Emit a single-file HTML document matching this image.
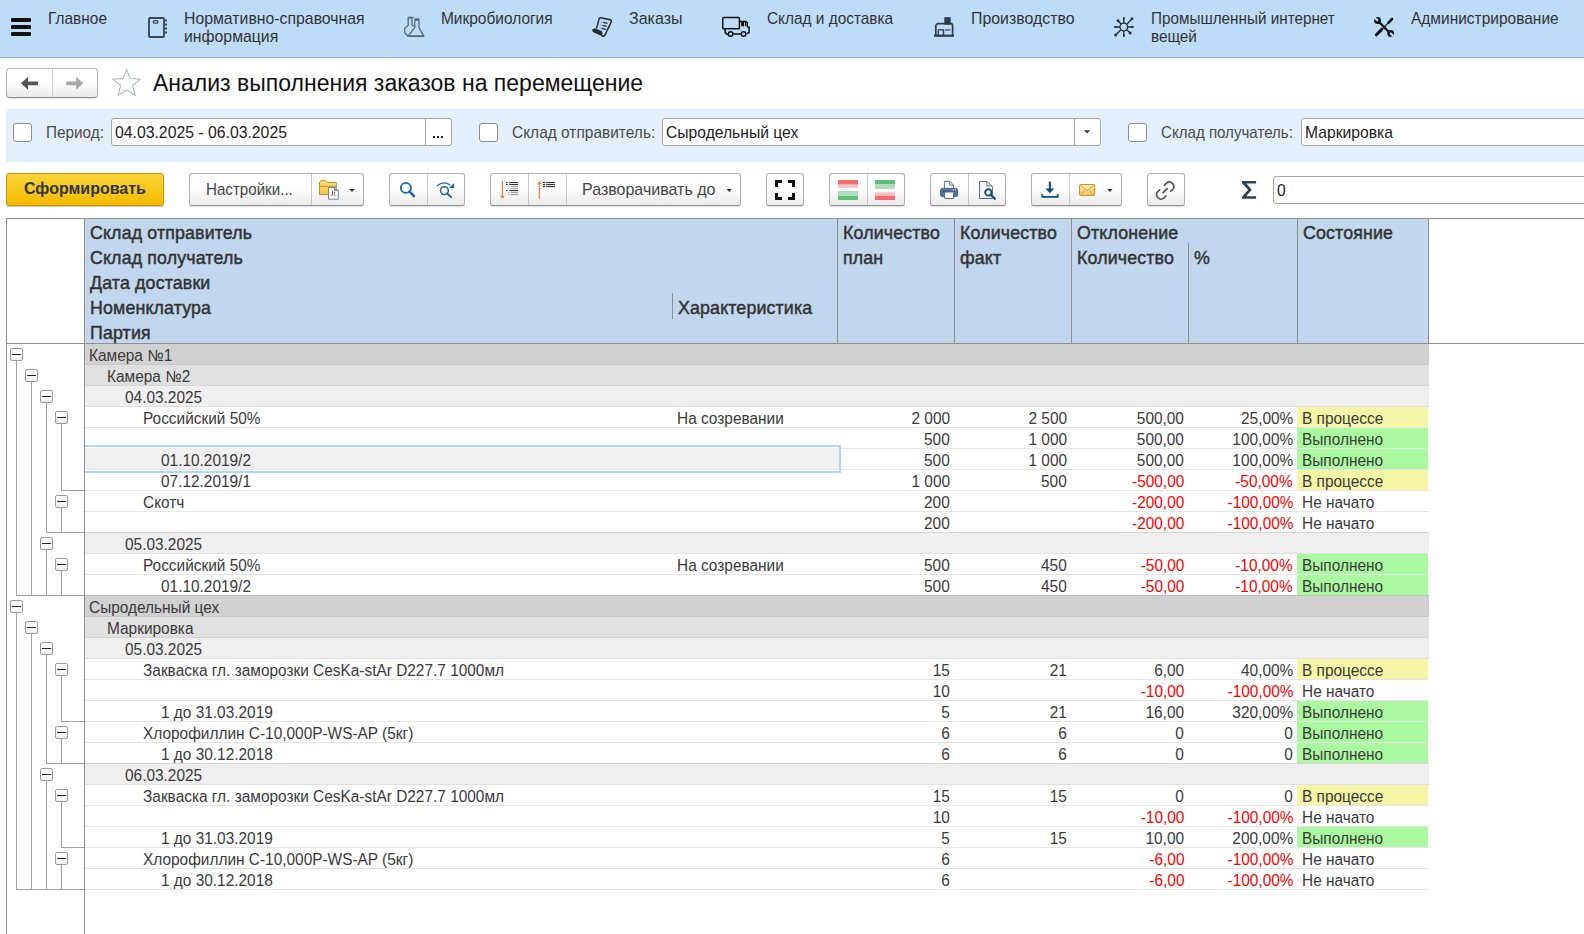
<!DOCTYPE html>
<html><head><meta charset="utf-8"><style>
html,body{margin:0;padding:0;width:1584px;height:934px;overflow:hidden;background:#fff;position:relative;font-family:"Liberation Sans",sans-serif;}
.a{position:absolute;}
.t{position:absolute;white-space:nowrap;}
.btn{box-sizing:border-box;border:1px solid #b0b0b0;border-bottom-color:#939393;border-radius:3px;background:linear-gradient(#fff 45%,#ebebeb);box-shadow:0 1px 0 rgba(0,0,0,.12);}
svg{display:block;}
</style></head><body>
<div class="a" style="left:0px;top:0px;width:1584px;height:57px;background:#bddcf7;"></div>
<div class="a" style="left:0px;top:57px;width:1584px;height:1px;background:#9fb6ca;"></div>
<div class="a" style="left:11px;top:18px;width:20px;height:4px;background:#111;border-radius:1px;"></div>
<div class="a" style="left:11px;top:25px;width:20px;height:4px;background:#111;border-radius:1px;"></div>
<div class="a" style="left:11px;top:32px;width:20px;height:4px;background:#111;border-radius:1px;"></div>
<div class="t" style="left:48px;top:7.61px;font-size:17px;line-height:21px;color:#333;transform:scaleX(0.908);transform-origin:0 0;">Главное</div>
<div class="t" style="left:184px;top:7.61px;font-size:17px;line-height:21px;color:#333;transform:scaleX(0.93);transform-origin:0 0;">Нормативно-справочная</div>
<div class="t" style="left:184px;top:25.61px;font-size:17px;line-height:21px;color:#333;transform:scaleX(0.93);transform-origin:0 0;">информация</div>
<div class="t" style="left:441px;top:7.61px;font-size:17px;line-height:21px;color:#333;transform:scaleX(0.909);transform-origin:0 0;">Микробиология</div>
<div class="t" style="left:629px;top:7.61px;font-size:17px;line-height:21px;color:#333;transform:scaleX(0.942);transform-origin:0 0;">Заказы</div>
<div class="t" style="left:767px;top:7.61px;font-size:17px;line-height:21px;color:#333;transform:scaleX(0.905);transform-origin:0 0;">Склад и доставка</div>
<div class="t" style="left:971px;top:7.61px;font-size:17px;line-height:21px;color:#333;transform:scaleX(0.934);transform-origin:0 0;">Производство</div>
<div class="t" style="left:1151px;top:7.61px;font-size:17px;line-height:21px;color:#333;transform:scaleX(0.898);transform-origin:0 0;">Промышленный интернет</div>
<div class="t" style="left:1151px;top:25.61px;font-size:17px;line-height:21px;color:#333;transform:scaleX(0.898);transform-origin:0 0;">вещей</div>
<div class="t" style="left:1411px;top:7.61px;font-size:17px;line-height:21px;color:#333;transform:scaleX(0.911);transform-origin:0 0;">Администрирование</div>
<div class="a" style="left:146px;top:15px"><svg width="24" height="25" viewBox="146 15 24 25"><rect x="149" y="18" width="15" height="19" rx="1" fill="none" stroke="#3e4a55" stroke-width="1.9"/><path d="M165 20.5h2M165 24.5h2M165 28.5h2M165 32.5h2" stroke="#3e4a55" stroke-width="2"/><rect x="153.3" y="20.6" width="4.6" height="2.6" rx="1.3" fill="none" stroke="#3e4a55" stroke-width="1.3"/></svg></div>
<div class="a" style="left:402px;top:15px"><svg width="26" height="25" viewBox="402 15 26 25"><path d="M407.6 17.6h5.8" stroke="#5b6b79" stroke-width="1.8"/><path d="M408.2 18v7.3l-3.4 3v4.6l3.7 3.6" fill="none" stroke="#5b6b79" stroke-width="1.3"/><path d="M412 18v6.8l2.3 1.5" fill="none" stroke="#5b6b79" stroke-width="1.3"/><rect x="414.2" y="18.3" width="5.6" height="2.6" rx="1.2" fill="#5b6b79"/><path d="M414.8 21v6.5L408.2 36h15.5l-4.7-8.5V21" fill="none" stroke="#5b6b79" stroke-width="1.3"/><path d="M408 36.3h16" stroke="#5b6b79" stroke-width="1.5"/></svg></div>
<div class="a" style="left:589px;top:14px"><svg width="27" height="26" viewBox="589 14 27 26"><path d="M599.5 17.6L610.5 19.8q1.4.6 .9 1.9L604.8 35.3q-1.2 1.7-3.2 .6" fill="none" stroke="#222a30" stroke-width="1.5"/><path d="M599.5 17.6L596.4 28.6" stroke="#222a30" stroke-width="1.5"/><path d="M592.3 29.2q2-1 4.4-.3l5.3 2.4q1.3 2.5-.3 4.6l-7.9-3.3q-2-1.2-1.5-3.4z" fill="#222a30"/><path d="M601.4 22h.6M603.2 22.4l4.3.9M600.6 25h.6M602.4 25.4l4.3.9M599.8 28h.6M601.6 28.4l4.3.9" stroke="#222a30" stroke-width="1.2"/></svg></div>
<div class="a" style="left:720px;top:14px"><svg width="32" height="26" viewBox="720 14 32 26"><rect x="722.8" y="17.5" width="16.6" height="11.2" rx=".8" fill="none" stroke="#111" stroke-width="1.5"/><path d="M739.4 21.6h6.6l1.3 1.2v4.3" fill="none" stroke="#111" stroke-width="1.5"/><rect x="741.2" y="21.5" width="2.8" height="4.8" fill="#111"/><path d="M745.5 22v4" stroke="#111" stroke-width="1.3"/><path d="M747.3 27.3h1.8v5.2l-2 1.2" fill="none" stroke="#111" stroke-width="1.5"/><path d="M725.1 28.8v3.8l2.6 2.3" fill="none" stroke="#111" stroke-width="1.5"/><circle cx="730.6" cy="34" r="2.3" fill="none" stroke="#111" stroke-width="1.5"/><circle cx="743.6" cy="34" r="2.3" fill="none" stroke="#111" stroke-width="1.5"/><path d="M732.9 34h8.4" stroke="#111" stroke-width="1.5"/></svg></div>
<div class="a" style="left:932px;top:15px"><svg width="24" height="24" viewBox="932 15 24 24"><rect x="944.3" y="17.2" width="6.4" height="7.5" fill="#2f3b46"/><path d="M935.8 36V25.5l1.6-1.8h14.4l.8 1.6V36" fill="none" stroke="#2f3b46" stroke-width="1.7"/><path d="M938.3 36.2v-6.3h5.2v6.3" fill="none" stroke="#2f3b46" stroke-width="1.4"/><path d="M945 30h5.5" stroke="#2f3b46" stroke-width="1.1"/><rect x="934" y="34.6" width="20" height="2.2" fill="#2f3b46"/></svg></div>
<div class="a" style="left:1112px;top:15px"><svg width="24" height="24" viewBox="1112 15 24 24"><circle cx="1123.8" cy="27" r="3.8" fill="none" stroke="#26323c" stroke-width="1.3"/><g stroke="#26323c" stroke-width="1.4"><path d="M1123.8 17.8v5.4M1123.8 30.8v5.4M1114.6 27h5.4M1128 27h5.4M1118.4 21.2l3 3M1126.6 29.6l3.3 3.2M1132 18.8l-5.2 5.4M1115.7 35.1l5.2-5.3"/></g><g fill="#26323c"><rect x="1123" y="17.3" width="1.8" height="2.5"/><rect x="1123" y="34.3" width="1.8" height="2.5"/><rect x="1114.2" y="26.1" width="2.5" height="1.8"/><rect x="1131" y="26.1" width="2.5" height="1.8"/><circle cx="1118" cy="20.8" r="1.5"/><circle cx="1130.2" cy="33" r="1.5"/><circle cx="1132" cy="18.8" r="1.5"/><circle cx="1115.7" cy="35.1" r="1.5"/></g></svg></div>
<div class="a" style="left:1372px;top:15px"><svg width="24" height="24" viewBox="1372 15 24 24"><path d="M1378.6 21.6l11 11" stroke="#111" stroke-width="2.2"/><circle cx="1377.5" cy="20.5" r="3.4" fill="#111"/><path d="M1377.3 20.3l-3.2-3.2" stroke="#bddcf7" stroke-width="2.3" stroke-linecap="round"/><circle cx="1390.7" cy="33.4" r="3.4" fill="#111"/><path d="M1390.9 33.6l3.2 3.2" stroke="#bddcf7" stroke-width="2.3" stroke-linecap="round"/><path d="M1376.4 34.8l5.4-5.4" stroke="#111" stroke-width="3" stroke-linecap="round"/><path d="M1381.6 29.6l7-7" stroke="#111" stroke-width="1.1"/><path d="M1388.6 22.6l3.4-3.6" stroke="#111" stroke-width="2.6" stroke-linecap="round"/></svg></div>
<div class="a btn" style="left:6px;top:68px;width:92px;height:30px;border-radius:4px;"></div>
<div class="a" style="left:52px;top:69px;width:1px;height:28px;background:#cfcfcf;"></div>
<div class="a" style="left:18px;top:74px"><svg width="24" height="18" viewBox="18 74 24 18"><path d="M21 83.3l7-6.5v4.6h10v3.8H28v4.6z" fill="#545454"/></svg></div>
<div class="a" style="left:63px;top:74px"><svg width="24" height="18" viewBox="63 74 24 18"><path d="M83.2 83.3l-7-6.5v4.6h-10v3.8h10v4.6z" fill="#a6a6a6"/></svg></div>
<div class="a" style="left:108px;top:66px"><svg width="38" height="34" viewBox="108 66 38 34"><path d="M126.6 69.6l3.7 9 9.9.6-7.6 6.4 2.5 9.8-8.5-5.4-8.5 5.4 2.5-9.8-7.6-6.4 9.9-.6z" fill="none" stroke="#a9b4bd" stroke-width="1.05"/></svg></div>
<div class="t" style="left:153px;top:68.53px;font-size:23px;line-height:29px;color:#111;">Анализ выполнения заказов на перемещение</div>
<div class="a" style="left:6px;top:109px;width:1578px;height:53px;background:#e3effb;"></div>
<div class="a" style="left:13px;top:123px;width:19px;height:19px;background:#fff;border:1px solid #8c8c8c;border-radius:3px;box-sizing:border-box;"></div>
<div class="a" style="left:479px;top:123px;width:19px;height:19px;background:#fff;border:1px solid #8c8c8c;border-radius:3px;box-sizing:border-box;"></div>
<div class="a" style="left:1128px;top:123px;width:19px;height:19px;background:#fff;border:1px solid #8c8c8c;border-radius:3px;box-sizing:border-box;"></div>
<div class="t" style="left:46px;top:121.61px;font-size:17px;line-height:21px;color:#4a4a4a;transform:scaleX(0.901);transform-origin:0 0;">Период:</div>
<div class="t" style="left:512px;top:121.61px;font-size:17px;line-height:21px;color:#4a4a4a;transform:scaleX(0.91);transform-origin:0 0;">Склад отправитель:</div>
<div class="t" style="left:1161px;top:121.61px;font-size:17px;line-height:21px;color:#4a4a4a;transform:scaleX(0.888);transform-origin:0 0;">Склад получатель:</div>
<div class="a" style="left:111px;top:118px;width:341px;height:28px;background:#fff;border:1px solid #a6a6a6;border-radius:3px;box-sizing:border-box;"></div>
<div class="a" style="left:425px;top:119px;width:1px;height:26px;background:#a9a9a9;"></div>
<div class="t" style="left:115px;top:121.61px;font-size:17px;line-height:21px;color:#222;transform:scaleX(0.928);transform-origin:0 0;">04.03.2025 - 06.03.2025</div>
<div class="a" style="left:433px;top:136px;width:2px;height:2px;background:#222;"></div>
<div class="a" style="left:437px;top:136px;width:2px;height:2px;background:#222;"></div>
<div class="a" style="left:441px;top:136px;width:2px;height:2px;background:#222;"></div>
<div class="a" style="left:662px;top:118px;width:439px;height:28px;background:#fff;border:1px solid #a6a6a6;border-radius:3px;box-sizing:border-box;"></div>
<div class="a" style="left:1074px;top:119px;width:1px;height:26px;background:#a9a9a9;"></div>
<div class="t" style="left:666px;top:121.61px;font-size:17px;line-height:21px;color:#222;transform:scaleX(0.921);transform-origin:0 0;">Сыродельный цех</div>
<div class="a" style="left:1082px;top:128px"><svg width="10" height="8" viewBox="1082 128 10 8"><path d="M1084 130.2h6.2l-3.1 3.4z" fill="#333"/></svg></div>
<div class="a" style="left:1301px;top:118px;width:300px;height:28px;background:#fff;border:1px solid #a6a6a6;border-radius:3px;box-sizing:border-box;"></div>
<div class="t" style="left:1305px;top:121.61px;font-size:17px;line-height:21px;color:#222;transform:scaleX(0.922);transform-origin:0 0;">Маркировка</div>
<div class="a" style="left:6px;top:173px;width:158px;height:33px;box-sizing:border-box;border:1px solid #c29a00;border-radius:3px;background:linear-gradient(#fdd53a,#f5bb00);box-shadow:0 1px 1px rgba(0,0,0,.25)"></div>
<div class="t" style="left:24px;top:179.46px;font-size:16px;line-height:20px;color:#2f3542;font-weight:bold;">Сформировать</div>
<div class="a btn" style="left:189px;top:173px;width:175px;height:33px;"></div>
<div class="a" style="left:311px;top:174px;width:1px;height:31px;background:#c9c9c9;"></div>
<div class="t" style="left:206px;top:178.61px;font-size:17px;line-height:21px;color:#444;transform:scaleX(0.89);transform-origin:0 0;">Настройки...</div>
<div class="a" style="left:317px;top:178px"><svg width="24" height="23" viewBox="317 178 24 23"><path d="M319.5 194.6V182.2l2.4-1.9h3.4l2.4 2.2h8.6v12.1z" fill="url(#fold)" stroke="#c98a2a" stroke-width="1"/><path d="M319.6 186.3h16.5" stroke="#c98a2a" stroke-width=".9"/><defs><linearGradient id="fold" x1="0" y1="0" x2="0" y2="1"><stop offset="0" stop-color="#ffe26a"/><stop offset="1" stop-color="#f2c350"/></linearGradient></defs><path d="M328.6 187.6h6.7l3.1 3.1v8.5h-9.8z" fill="#fff" stroke="#718190" stroke-width="1"/><path d="M334.6 187.8v2.8h3.4" fill="#8a9aa8" stroke="#718190" stroke-width=".9"/><path d="M332.5 195.2v-4.3" stroke="#e33" stroke-width="1"/><path d="M334.4 195.2v-3.6" stroke="#4a4" stroke-width="1"/><path d="M330 195.3h7" stroke="#999" stroke-width=".7"/></svg></div>
<div class="a" style="left:348px;top:188px"><svg width="8" height="5" viewBox="348 188 8 5"><path d="M349 189h6l-3 3z" fill="#3a3a3a"/></svg></div>
<div class="a btn" style="left:389px;top:173px;width:76px;height:33px;"></div>
<div class="a" style="left:427px;top:174px;width:1px;height:31px;background:#c9c9c9;"></div>
<div class="a" style="left:396px;top:179px"><svg width="22" height="21" viewBox="396 179 22 21"><circle cx="405.9" cy="187.9" r="5" fill="none" stroke="#1f67a0" stroke-width="1.9"/><path d="M409.6 191.6l4.3 4.4" stroke="#1f67a0" stroke-width="2.6" stroke-linecap="round"/></svg></div>
<div class="a" style="left:434px;top:179px"><svg width="24" height="21" viewBox="434 179 24 21"><circle cx="444.4" cy="190.6" r="3.9" fill="none" stroke="#1f67a0" stroke-width="1.5"/><path d="M447.3 193.5l3.7 3.6" stroke="#1f67a0" stroke-width="2" stroke-linecap="round"/><path d="M437.4 185.6q6.5-5.2 12.6-.6" fill="none" stroke="#1f67a0" stroke-width="1.3" stroke-linecap="round"/><path d="M454.2 183v5h-5.2z" fill="#1f67a0"/></svg></div>
<div class="a btn" style="left:490px;top:173px;width:251px;height:33px;"></div>
<div class="a" style="left:528px;top:174px;width:1px;height:31px;background:#c9c9c9;"></div>
<div class="a" style="left:566px;top:174px;width:1px;height:31px;background:#c9c9c9;"></div>
<div class="a" style="left:498px;top:179px"><svg width="23" height="22" viewBox="498 179 23 22"><path d="M502.4 181v15.5" stroke="#f0813f" stroke-width="1.3"/><path d="M500 195.8h4.9l-2.45 3.3z" fill="#f0813f"/><g stroke="#1a1a1a" stroke-width="1"><path d="M506 182.6h1.6M509.3 182.6h8.7M506 184.6h1.6M509.3 184.6h8.7M506 190.6h1.6M509.3 190.6h8.7"/></g><g stroke="#8a8a8a" stroke-width=".9"><path d="M508 186.6h1.2M511 186.6h7M508 188.6h1.2M511 188.6h7M508 192.6h1.2M511 192.6h7M508 194.6h1.2M511 194.6h7"/></g></svg></div>
<div class="a" style="left:535px;top:179px"><svg width="23" height="22" viewBox="535 179 23 22"><path d="M539.4 183.5V199" stroke="#f0813f" stroke-width="1.3"/><path d="M537 184.2h4.9l-2.45-3.3z" fill="#f0813f"/><g stroke="#1a1a1a" stroke-width="1"><path d="M543 182.6h2M546.2 182.6h8.8M543 184.6h2M546.2 184.6h8.8M543 186.6h2M546.2 186.6h8.8"/></g></svg></div>
<div class="t" style="left:582px;top:178.61px;font-size:17px;line-height:21px;color:#444;transform:scaleX(0.942);transform-origin:0 0;">Разворачивать до</div>
<div class="a" style="left:725px;top:188px"><svg width="9" height="5" viewBox="725 188 9 5"><path d="M726.5 189h5.5l-2.75 2.9z" fill="#3a3a3a"/></svg></div>
<div class="a btn" style="left:766px;top:173px;width:38px;height:33px;"></div>
<div class="a" style="left:775px;top:180px"><svg width="20" height="20" viewBox="0 0 20 20"><path d="M1.5 7V1.5H7M13 1.5h5.5V7M18.5 13v5.5H13M7 18.5H1.5V13" fill="none" stroke="#111" stroke-width="3"/></svg></div>
<div class="a btn" style="left:829px;top:173px;width:76px;height:33px;"></div>
<div class="a" style="left:867px;top:174px;width:1px;height:31px;background:#c9c9c9;"></div>
<div class="a" style="left:838px;top:180px;width:20px;height:4px;background:#f76a6c;"></div>
<div class="a" style="left:838px;top:184px;width:20px;height:4px;background:linear-gradient(#f8b2b5,#fbd0d2);"></div>
<div class="a" style="left:838px;top:191px;width:20px;height:5px;background:#b2dcc0;"></div>
<div class="a" style="left:838px;top:196px;width:20px;height:4px;background:#60be7b;"></div>
<div class="a" style="left:875px;top:180px;width:20px;height:4px;background:#60be7b;"></div>
<div class="a" style="left:875px;top:184px;width:20px;height:5px;background:#b2dcc0;"></div>
<div class="a" style="left:875px;top:192px;width:20px;height:4px;background:linear-gradient(#fbd0d2,#f8b2b5);"></div>
<div class="a" style="left:875px;top:196px;width:20px;height:4px;background:#f76a6c;"></div>
<div class="a btn" style="left:930px;top:173px;width:76px;height:33px;"></div>
<div class="a" style="left:968px;top:174px;width:1px;height:31px;background:#c9c9c9;"></div>
<div class="a" style="left:938px;top:179px"><svg width="22" height="22" viewBox="938 179 22 22"><path d="M944.4 188v-6.7h5.4l3.6 3.7v3" fill="#fafafa" stroke="#5a6c80" stroke-width="1"/><path d="M949.6 181.5v3.6h3.6" fill="none" stroke="#5a6c80" stroke-width=".9"/><rect x="940.6" y="188.4" width="17" height="8.2" rx="1.8" fill="#4f75a3" stroke="#3a5878" stroke-width=".9"/><path d="M943 191.3h12.5" stroke="#3a5878" stroke-width="1"/><rect x="944.6" y="192" width="9" height="6.5" rx=".5" fill="#fff" stroke="#5a6c80" stroke-width="1"/><circle cx="953.4" cy="189.8" r=".6" fill="#fff"/><circle cx="955.4" cy="189.8" r=".6" fill="#fff"/></svg></div>
<div class="a" style="left:976px;top:179px"><svg width="22" height="22" viewBox="976 179 22 22"><path d="M979.5 198.5v-17h7.7l5.2 5v12z" fill="#f6f6f6" stroke="#5a6c80" stroke-width="1"/><path d="M986.8 181.6v4.3h5.3" fill="none" stroke="#5a6c80" stroke-width=".9"/><circle cx="988.4" cy="192.4" r="3.2" fill="#fff" stroke="#0f4f7f" stroke-width="1.9"/><path d="M990.8 194.8l3.9 3.9" stroke="#0f4f7f" stroke-width="2.3" stroke-linecap="square"/></svg></div>
<div class="a btn" style="left:1031px;top:173px;width:91px;height:33px;"></div>
<div class="a" style="left:1069px;top:174px;width:1px;height:31px;background:#c9c9c9;"></div>
<div class="a" style="left:1039px;top:180px"><svg width="22" height="20" viewBox="1039 180 22 20"><path d="M1049.9 182.6v6.8" stroke="#0f4d80" stroke-width="2.1" stroke-linecap="round"/><path d="M1045.4 188.6h9l-4.5 4.6z" fill="#0f4d80"/><path d="M1042.3 194.3v2.6h15.4v-2.6" fill="none" stroke="#0f4d80" stroke-width="1.9" stroke-linejoin="round"/></svg></div>
<div class="a" style="left:1077px;top:182px"><svg width="20" height="16" viewBox="1077 182 20 16"><defs><linearGradient id="env" x1="0" y1="0" x2="0" y2="1"><stop offset="0" stop-color="#fdeeb6"/><stop offset="1" stop-color="#f0c060"/></linearGradient></defs><rect x="1079.5" y="184.5" width="15.2" height="11" rx="1.2" fill="url(#env)" stroke="#d0902a" stroke-width="1"/><path d="M1080 185.2l7.1 5.3 7.1-5.3M1080.3 195l4.7-4.3M1093.9 195l-4.7-4.3" fill="none" stroke="#cf9430" stroke-width=".8"/></svg></div>
<div class="a" style="left:1106px;top:188px"><svg width="8" height="5" viewBox="1106 188 8 5"><path d="M1107.2 189h5.5l-2.75 2.9z" fill="#3a3a3a"/></svg></div>
<div class="a btn" style="left:1147px;top:173px;width:38px;height:33px;"></div>
<div class="a" style="left:1152px;top:177px"><svg width="27" height="26" viewBox="1152 177 27 26"><path d="M1164 185.6L1166.5 183.1A4.4 4.4 0 0 1 1172.7 189.3L1170.2 191.8M1160.2 189.3L1157.7 191.8A4.4 4.4 0 0 0 1163.9 198L1166.4 195.5M1162.6 193.1L1167.6 188.1" fill="none" stroke="#4d4d4d" stroke-width="1.6"/></svg></div>
<div class="a" style="left:1240px;top:179px"><svg width="18" height="22" viewBox="1240 179 18 22"><path d="M1242 181.1h14.1v2.4h-9.7l5.3 6.3-5.5 6.5h9.9v2.5h-14.1v-2.1l6.2-6.9-6.2-6.6z" fill="#2d4355"/></svg></div>
<div class="a" style="left:1273px;top:176px;width:330px;height:28px;background:#fff;border:1px solid #a6a6a6;border-radius:3px;box-sizing:border-box;"></div>
<div class="t" style="left:1277px;top:179.61px;font-size:17px;line-height:21px;color:#222;transform:scaleX(0.92);transform-origin:0 0;">0</div>
<div class="a" style="left:85px;top:219px;width:1343px;height:124px;background:#c0d7ee;"></div>
<div class="a" style="left:6px;top:218px;width:1578px;height:1px;background:#8f8f8f;"></div>
<div class="a" style="left:6px;top:343px;width:1578px;height:1px;background:#8f8f8f;"></div>
<div class="a" style="left:6px;top:218px;width:1px;height:716px;background:#8f8f8f;"></div>
<div class="a" style="left:84px;top:218px;width:1px;height:716px;background:#8f8f8f;"></div>
<div class="a" style="left:837px;top:218px;width:1px;height:125px;background:#8f8f8f;"></div>
<div class="a" style="left:954px;top:218px;width:1px;height:125px;background:#8f8f8f;"></div>
<div class="a" style="left:1071px;top:218px;width:1px;height:125px;background:#8f8f8f;"></div>
<div class="a" style="left:1297px;top:218px;width:1px;height:125px;background:#8f8f8f;"></div>
<div class="a" style="left:1428px;top:218px;width:1px;height:125px;background:#8f8f8f;"></div>
<div class="a" style="left:672px;top:293px;width:1px;height:26px;background:#8f8f8f;"></div>
<div class="a" style="left:1188px;top:243px;width:1px;height:100px;background:#8f8f8f;"></div>
<div class="t" style="left:90px;top:221.83px;font-size:17.8px;line-height:22px;color:#333;-webkit-text-stroke:0.45px #333;letter-spacing:0.15px;">Склад отправитель</div>
<div class="t" style="left:90px;top:246.83px;font-size:17.8px;line-height:22px;color:#333;-webkit-text-stroke:0.45px #333;letter-spacing:0.15px;">Склад получатель</div>
<div class="t" style="left:90px;top:271.83px;font-size:17.8px;line-height:22px;color:#333;-webkit-text-stroke:0.45px #333;letter-spacing:0.15px;">Дата доставки</div>
<div class="t" style="left:90px;top:296.83px;font-size:17.8px;line-height:22px;color:#333;-webkit-text-stroke:0.45px #333;letter-spacing:0.15px;">Номенклатура</div>
<div class="t" style="left:90px;top:321.83px;font-size:17.8px;line-height:22px;color:#333;-webkit-text-stroke:0.45px #333;letter-spacing:0.15px;">Партия</div>
<div class="t" style="left:678px;top:296.83px;font-size:17.8px;line-height:22px;color:#333;-webkit-text-stroke:0.45px #333;letter-spacing:0.15px;">Характеристика</div>
<div class="t" style="left:843px;top:221.83px;font-size:17.8px;line-height:22px;color:#333;-webkit-text-stroke:0.45px #333;letter-spacing:0.15px;">Количество</div>
<div class="t" style="left:843px;top:246.83px;font-size:17.8px;line-height:22px;color:#333;-webkit-text-stroke:0.45px #333;letter-spacing:0.15px;">план</div>
<div class="t" style="left:960px;top:221.83px;font-size:17.8px;line-height:22px;color:#333;-webkit-text-stroke:0.45px #333;letter-spacing:0.15px;">Количество</div>
<div class="t" style="left:960px;top:246.83px;font-size:17.8px;line-height:22px;color:#333;-webkit-text-stroke:0.45px #333;letter-spacing:0.15px;">факт</div>
<div class="t" style="left:1077px;top:221.83px;font-size:17.8px;line-height:22px;color:#333;-webkit-text-stroke:0.45px #333;letter-spacing:0.15px;">Отклонение</div>
<div class="t" style="left:1077px;top:246.83px;font-size:17.8px;line-height:22px;color:#333;-webkit-text-stroke:0.45px #333;letter-spacing:0.15px;">Количество</div>
<div class="t" style="left:1194px;top:246.83px;font-size:17.8px;line-height:22px;color:#333;-webkit-text-stroke:0.45px #333;letter-spacing:0.15px;">%</div>
<div class="t" style="left:1303px;top:221.83px;font-size:17.8px;line-height:22px;color:#333;-webkit-text-stroke:0.45px #333;letter-spacing:0.15px;">Состояние</div>
<div class="a" style="left:85px;top:344px;width:1344px;height:20px;background:#d1d1d1;"></div>
<div class="a" style="left:85px;top:364px;width:1344px;height:1px;background:#c6c6c6;"></div>
<div class="a" style="left:85px;top:365px;width:1344px;height:20px;background:#e0e0e0;"></div>
<div class="a" style="left:85px;top:385px;width:1344px;height:1px;background:#d4d4d4;"></div>
<div class="a" style="left:85px;top:386px;width:1344px;height:20px;background:#efefef;"></div>
<div class="a" style="left:85px;top:406px;width:1344px;height:1px;background:#e0e0e0;"></div>
<div class="a" style="left:85px;top:427px;width:1344px;height:1px;background:#e5e5e5;"></div>
<div class="a" style="left:1297px;top:407px;width:131px;height:20px;background:#f5f5a6;"></div>
<div class="a" style="left:85px;top:448px;width:1344px;height:1px;background:#e5e5e5;"></div>
<div class="a" style="left:1297px;top:428px;width:131px;height:20px;background:#aaf9a0;"></div>
<div class="a" style="left:85px;top:469px;width:1344px;height:1px;background:#e5e5e5;"></div>
<div class="a" style="left:1297px;top:449px;width:131px;height:20px;background:#aaf9a0;"></div>
<div class="a" style="left:85px;top:490px;width:1344px;height:1px;background:#e5e5e5;"></div>
<div class="a" style="left:1297px;top:470px;width:131px;height:20px;background:#f5f5a6;"></div>
<div class="a" style="left:85px;top:511px;width:1344px;height:1px;background:#e5e5e5;"></div>
<div class="a" style="left:85px;top:532px;width:1344px;height:1px;background:#d4d4d4;"></div>
<div class="a" style="left:85px;top:533px;width:1344px;height:20px;background:#efefef;"></div>
<div class="a" style="left:85px;top:553px;width:1344px;height:1px;background:#e0e0e0;"></div>
<div class="a" style="left:85px;top:574px;width:1344px;height:1px;background:#e5e5e5;"></div>
<div class="a" style="left:1297px;top:554px;width:131px;height:20px;background:#aaf9a0;"></div>
<div class="a" style="left:85px;top:595px;width:1344px;height:1px;background:#bdbdbd;"></div>
<div class="a" style="left:1297px;top:575px;width:131px;height:20px;background:#aaf9a0;"></div>
<div class="a" style="left:85px;top:596px;width:1344px;height:20px;background:#d1d1d1;"></div>
<div class="a" style="left:85px;top:616px;width:1344px;height:1px;background:#c6c6c6;"></div>
<div class="a" style="left:85px;top:617px;width:1344px;height:20px;background:#e0e0e0;"></div>
<div class="a" style="left:85px;top:637px;width:1344px;height:1px;background:#d4d4d4;"></div>
<div class="a" style="left:85px;top:638px;width:1344px;height:20px;background:#efefef;"></div>
<div class="a" style="left:85px;top:658px;width:1344px;height:1px;background:#e0e0e0;"></div>
<div class="a" style="left:85px;top:679px;width:1344px;height:1px;background:#e5e5e5;"></div>
<div class="a" style="left:1297px;top:659px;width:131px;height:20px;background:#f5f5a6;"></div>
<div class="a" style="left:85px;top:700px;width:1344px;height:1px;background:#e5e5e5;"></div>
<div class="a" style="left:85px;top:721px;width:1344px;height:1px;background:#e5e5e5;"></div>
<div class="a" style="left:1297px;top:701px;width:131px;height:20px;background:#aaf9a0;"></div>
<div class="a" style="left:85px;top:742px;width:1344px;height:1px;background:#e5e5e5;"></div>
<div class="a" style="left:1297px;top:722px;width:131px;height:20px;background:#aaf9a0;"></div>
<div class="a" style="left:85px;top:763px;width:1344px;height:1px;background:#d4d4d4;"></div>
<div class="a" style="left:1297px;top:743px;width:131px;height:20px;background:#aaf9a0;"></div>
<div class="a" style="left:85px;top:764px;width:1344px;height:20px;background:#efefef;"></div>
<div class="a" style="left:85px;top:784px;width:1344px;height:1px;background:#e0e0e0;"></div>
<div class="a" style="left:85px;top:805px;width:1344px;height:1px;background:#e5e5e5;"></div>
<div class="a" style="left:1297px;top:785px;width:131px;height:20px;background:#f5f5a6;"></div>
<div class="a" style="left:85px;top:826px;width:1344px;height:1px;background:#e5e5e5;"></div>
<div class="a" style="left:85px;top:847px;width:1344px;height:1px;background:#e5e5e5;"></div>
<div class="a" style="left:1297px;top:827px;width:131px;height:20px;background:#aaf9a0;"></div>
<div class="a" style="left:85px;top:868px;width:1344px;height:1px;background:#e5e5e5;"></div>
<div class="a" style="left:85px;top:889px;width:1344px;height:1px;background:#e5e5e5;"></div>
<div class="a" style="left:85px;top:445px;width:756px;height:28px;border:2px solid #b0d6f6;border-left:0;box-sizing:border-box;background:#fff;"></div>
<div class="a" style="left:85px;top:448px;width:754px;height:21px;background:#f0f0f0;"></div>
<div class="a" style="left:85px;top:469px;width:754px;height:1px;background:#e5e5e5;"></div>
<div class="t" style="left:89.1px;top:346.46px;font-size:16px;line-height:20px;color:#3a3a3a;transform:scaleX(0.963);transform-origin:0 0;">Камера №1</div>
<div class="t" style="left:107.05px;top:367.46px;font-size:16px;line-height:20px;color:#3a3a3a;transform:scaleX(0.963);transform-origin:0 0;">Камера №2</div>
<div class="t" style="left:125.0px;top:388.46px;font-size:16px;line-height:20px;color:#3a3a3a;transform:scaleX(0.963);transform-origin:0 0;">04.03.2025</div>
<div class="t" style="left:142.95px;top:409.46px;font-size:16px;line-height:20px;color:#3a3a3a;transform:scaleX(0.963);transform-origin:0 0;">Российский 50%</div>
<div class="t" style="left:676.5px;top:409.46px;font-size:16px;line-height:20px;color:#3a3a3a;transform:scaleX(0.963);transform-origin:0 0;">На созревании</div>
<div class="t" style="right:634px;top:409.46px;font-size:16px;line-height:20px;color:#3a3a3a;text-align:right;transform:scaleX(0.963);transform-origin:100% 0;">2 000</div>
<div class="t" style="right:517px;top:409.46px;font-size:16px;line-height:20px;color:#3a3a3a;text-align:right;transform:scaleX(0.963);transform-origin:100% 0;">2 500</div>
<div class="t" style="right:400px;top:409.46px;font-size:16px;line-height:20px;color:#3a3a3a;text-align:right;transform:scaleX(0.963);transform-origin:100% 0;">500,00</div>
<div class="t" style="right:291px;top:409.46px;font-size:16px;line-height:20px;color:#3a3a3a;text-align:right;transform:scaleX(0.963);transform-origin:100% 0;">25,00%</div>
<div class="t" style="left:1302px;top:409.46px;font-size:16px;line-height:20px;color:#3a3a3a;transform:scaleX(0.963);transform-origin:0 0;">В процессе</div>
<div class="t" style="right:634px;top:430.46px;font-size:16px;line-height:20px;color:#3a3a3a;text-align:right;transform:scaleX(0.963);transform-origin:100% 0;">500</div>
<div class="t" style="right:517px;top:430.46px;font-size:16px;line-height:20px;color:#3a3a3a;text-align:right;transform:scaleX(0.963);transform-origin:100% 0;">1 000</div>
<div class="t" style="right:400px;top:430.46px;font-size:16px;line-height:20px;color:#3a3a3a;text-align:right;transform:scaleX(0.963);transform-origin:100% 0;">500,00</div>
<div class="t" style="right:291px;top:430.46px;font-size:16px;line-height:20px;color:#3a3a3a;text-align:right;transform:scaleX(0.963);transform-origin:100% 0;">100,00%</div>
<div class="t" style="left:1302px;top:430.46px;font-size:16px;line-height:20px;color:#3a3a3a;transform:scaleX(0.963);transform-origin:0 0;">Выполнено</div>
<div class="t" style="left:160.89999999999998px;top:451.46px;font-size:16px;line-height:20px;color:#3a3a3a;transform:scaleX(0.963);transform-origin:0 0;">01.10.2019/2</div>
<div class="t" style="right:634px;top:451.46px;font-size:16px;line-height:20px;color:#3a3a3a;text-align:right;transform:scaleX(0.963);transform-origin:100% 0;">500</div>
<div class="t" style="right:517px;top:451.46px;font-size:16px;line-height:20px;color:#3a3a3a;text-align:right;transform:scaleX(0.963);transform-origin:100% 0;">1 000</div>
<div class="t" style="right:400px;top:451.46px;font-size:16px;line-height:20px;color:#3a3a3a;text-align:right;transform:scaleX(0.963);transform-origin:100% 0;">500,00</div>
<div class="t" style="right:291px;top:451.46px;font-size:16px;line-height:20px;color:#3a3a3a;text-align:right;transform:scaleX(0.963);transform-origin:100% 0;">100,00%</div>
<div class="t" style="left:1302px;top:451.46px;font-size:16px;line-height:20px;color:#3a3a3a;transform:scaleX(0.963);transform-origin:0 0;">Выполнено</div>
<div class="t" style="left:160.89999999999998px;top:472.46px;font-size:16px;line-height:20px;color:#3a3a3a;transform:scaleX(0.963);transform-origin:0 0;">07.12.2019/1</div>
<div class="t" style="right:634px;top:472.46px;font-size:16px;line-height:20px;color:#3a3a3a;text-align:right;transform:scaleX(0.963);transform-origin:100% 0;">1 000</div>
<div class="t" style="right:517px;top:472.46px;font-size:16px;line-height:20px;color:#3a3a3a;text-align:right;transform:scaleX(0.963);transform-origin:100% 0;">500</div>
<div class="t" style="right:400px;top:472.46px;font-size:16px;line-height:20px;color:#ff0000;text-align:right;transform:scaleX(0.963);transform-origin:100% 0;">-500,00</div>
<div class="t" style="right:291px;top:472.46px;font-size:16px;line-height:20px;color:#ff0000;text-align:right;transform:scaleX(0.963);transform-origin:100% 0;">-50,00%</div>
<div class="t" style="left:1302px;top:472.46px;font-size:16px;line-height:20px;color:#3a3a3a;transform:scaleX(0.963);transform-origin:0 0;">В процессе</div>
<div class="t" style="left:142.95px;top:493.46px;font-size:16px;line-height:20px;color:#3a3a3a;transform:scaleX(0.963);transform-origin:0 0;">Скотч</div>
<div class="t" style="right:634px;top:493.46px;font-size:16px;line-height:20px;color:#3a3a3a;text-align:right;transform:scaleX(0.963);transform-origin:100% 0;">200</div>
<div class="t" style="right:400px;top:493.46px;font-size:16px;line-height:20px;color:#ff0000;text-align:right;transform:scaleX(0.963);transform-origin:100% 0;">-200,00</div>
<div class="t" style="right:291px;top:493.46px;font-size:16px;line-height:20px;color:#ff0000;text-align:right;transform:scaleX(0.963);transform-origin:100% 0;">-100,00%</div>
<div class="t" style="left:1302px;top:493.46px;font-size:16px;line-height:20px;color:#3a3a3a;transform:scaleX(0.963);transform-origin:0 0;">Не начато</div>
<div class="t" style="right:634px;top:514.46px;font-size:16px;line-height:20px;color:#3a3a3a;text-align:right;transform:scaleX(0.963);transform-origin:100% 0;">200</div>
<div class="t" style="right:400px;top:514.46px;font-size:16px;line-height:20px;color:#ff0000;text-align:right;transform:scaleX(0.963);transform-origin:100% 0;">-200,00</div>
<div class="t" style="right:291px;top:514.46px;font-size:16px;line-height:20px;color:#ff0000;text-align:right;transform:scaleX(0.963);transform-origin:100% 0;">-100,00%</div>
<div class="t" style="left:1302px;top:514.46px;font-size:16px;line-height:20px;color:#3a3a3a;transform:scaleX(0.963);transform-origin:0 0;">Не начато</div>
<div class="t" style="left:125.0px;top:535.46px;font-size:16px;line-height:20px;color:#3a3a3a;transform:scaleX(0.963);transform-origin:0 0;">05.03.2025</div>
<div class="t" style="left:142.95px;top:556.46px;font-size:16px;line-height:20px;color:#3a3a3a;transform:scaleX(0.963);transform-origin:0 0;">Российский 50%</div>
<div class="t" style="left:676.5px;top:556.46px;font-size:16px;line-height:20px;color:#3a3a3a;transform:scaleX(0.963);transform-origin:0 0;">На созревании</div>
<div class="t" style="right:634px;top:556.46px;font-size:16px;line-height:20px;color:#3a3a3a;text-align:right;transform:scaleX(0.963);transform-origin:100% 0;">500</div>
<div class="t" style="right:517px;top:556.46px;font-size:16px;line-height:20px;color:#3a3a3a;text-align:right;transform:scaleX(0.963);transform-origin:100% 0;">450</div>
<div class="t" style="right:400px;top:556.46px;font-size:16px;line-height:20px;color:#ff0000;text-align:right;transform:scaleX(0.963);transform-origin:100% 0;">-50,00</div>
<div class="t" style="right:291px;top:556.46px;font-size:16px;line-height:20px;color:#ff0000;text-align:right;transform:scaleX(0.963);transform-origin:100% 0;">-10,00%</div>
<div class="t" style="left:1302px;top:556.46px;font-size:16px;line-height:20px;color:#3a3a3a;transform:scaleX(0.963);transform-origin:0 0;">Выполнено</div>
<div class="t" style="left:160.89999999999998px;top:577.46px;font-size:16px;line-height:20px;color:#3a3a3a;transform:scaleX(0.963);transform-origin:0 0;">01.10.2019/2</div>
<div class="t" style="right:634px;top:577.46px;font-size:16px;line-height:20px;color:#3a3a3a;text-align:right;transform:scaleX(0.963);transform-origin:100% 0;">500</div>
<div class="t" style="right:517px;top:577.46px;font-size:16px;line-height:20px;color:#3a3a3a;text-align:right;transform:scaleX(0.963);transform-origin:100% 0;">450</div>
<div class="t" style="right:400px;top:577.46px;font-size:16px;line-height:20px;color:#ff0000;text-align:right;transform:scaleX(0.963);transform-origin:100% 0;">-50,00</div>
<div class="t" style="right:291px;top:577.46px;font-size:16px;line-height:20px;color:#ff0000;text-align:right;transform:scaleX(0.963);transform-origin:100% 0;">-10,00%</div>
<div class="t" style="left:1302px;top:577.46px;font-size:16px;line-height:20px;color:#3a3a3a;transform:scaleX(0.963);transform-origin:0 0;">Выполнено</div>
<div class="t" style="left:89.1px;top:598.46px;font-size:16px;line-height:20px;color:#3a3a3a;transform:scaleX(0.963);transform-origin:0 0;">Сыродельный цех</div>
<div class="t" style="left:107.05px;top:619.46px;font-size:16px;line-height:20px;color:#3a3a3a;transform:scaleX(0.963);transform-origin:0 0;">Маркировка</div>
<div class="t" style="left:125.0px;top:640.46px;font-size:16px;line-height:20px;color:#3a3a3a;transform:scaleX(0.963);transform-origin:0 0;">05.03.2025</div>
<div class="t" style="left:142.95px;top:661.46px;font-size:16px;line-height:20px;color:#3a3a3a;transform:scaleX(0.963);transform-origin:0 0;">Закваска гл. заморозки CesKa-stAr D227.7 1000мл</div>
<div class="t" style="right:634px;top:661.46px;font-size:16px;line-height:20px;color:#3a3a3a;text-align:right;transform:scaleX(0.963);transform-origin:100% 0;">15</div>
<div class="t" style="right:517px;top:661.46px;font-size:16px;line-height:20px;color:#3a3a3a;text-align:right;transform:scaleX(0.963);transform-origin:100% 0;">21</div>
<div class="t" style="right:400px;top:661.46px;font-size:16px;line-height:20px;color:#3a3a3a;text-align:right;transform:scaleX(0.963);transform-origin:100% 0;">6,00</div>
<div class="t" style="right:291px;top:661.46px;font-size:16px;line-height:20px;color:#3a3a3a;text-align:right;transform:scaleX(0.963);transform-origin:100% 0;">40,00%</div>
<div class="t" style="left:1302px;top:661.46px;font-size:16px;line-height:20px;color:#3a3a3a;transform:scaleX(0.963);transform-origin:0 0;">В процессе</div>
<div class="t" style="right:634px;top:682.46px;font-size:16px;line-height:20px;color:#3a3a3a;text-align:right;transform:scaleX(0.963);transform-origin:100% 0;">10</div>
<div class="t" style="right:400px;top:682.46px;font-size:16px;line-height:20px;color:#ff0000;text-align:right;transform:scaleX(0.963);transform-origin:100% 0;">-10,00</div>
<div class="t" style="right:291px;top:682.46px;font-size:16px;line-height:20px;color:#ff0000;text-align:right;transform:scaleX(0.963);transform-origin:100% 0;">-100,00%</div>
<div class="t" style="left:1302px;top:682.46px;font-size:16px;line-height:20px;color:#3a3a3a;transform:scaleX(0.963);transform-origin:0 0;">Не начато</div>
<div class="t" style="left:160.89999999999998px;top:703.46px;font-size:16px;line-height:20px;color:#3a3a3a;transform:scaleX(0.963);transform-origin:0 0;">1 до 31.03.2019</div>
<div class="t" style="right:634px;top:703.46px;font-size:16px;line-height:20px;color:#3a3a3a;text-align:right;transform:scaleX(0.963);transform-origin:100% 0;">5</div>
<div class="t" style="right:517px;top:703.46px;font-size:16px;line-height:20px;color:#3a3a3a;text-align:right;transform:scaleX(0.963);transform-origin:100% 0;">21</div>
<div class="t" style="right:400px;top:703.46px;font-size:16px;line-height:20px;color:#3a3a3a;text-align:right;transform:scaleX(0.963);transform-origin:100% 0;">16,00</div>
<div class="t" style="right:291px;top:703.46px;font-size:16px;line-height:20px;color:#3a3a3a;text-align:right;transform:scaleX(0.963);transform-origin:100% 0;">320,00%</div>
<div class="t" style="left:1302px;top:703.46px;font-size:16px;line-height:20px;color:#3a3a3a;transform:scaleX(0.963);transform-origin:0 0;">Выполнено</div>
<div class="t" style="left:142.95px;top:724.46px;font-size:16px;line-height:20px;color:#3a3a3a;transform:scaleX(0.963);transform-origin:0 0;">Хлорофиллин C-10,000P-WS-AP (5кг)</div>
<div class="t" style="right:634px;top:724.46px;font-size:16px;line-height:20px;color:#3a3a3a;text-align:right;transform:scaleX(0.963);transform-origin:100% 0;">6</div>
<div class="t" style="right:517px;top:724.46px;font-size:16px;line-height:20px;color:#3a3a3a;text-align:right;transform:scaleX(0.963);transform-origin:100% 0;">6</div>
<div class="t" style="right:400px;top:724.46px;font-size:16px;line-height:20px;color:#3a3a3a;text-align:right;transform:scaleX(0.963);transform-origin:100% 0;">0</div>
<div class="t" style="right:291px;top:724.46px;font-size:16px;line-height:20px;color:#3a3a3a;text-align:right;transform:scaleX(0.963);transform-origin:100% 0;">0</div>
<div class="t" style="left:1302px;top:724.46px;font-size:16px;line-height:20px;color:#3a3a3a;transform:scaleX(0.963);transform-origin:0 0;">Выполнено</div>
<div class="t" style="left:160.89999999999998px;top:745.46px;font-size:16px;line-height:20px;color:#3a3a3a;transform:scaleX(0.963);transform-origin:0 0;">1 до 30.12.2018</div>
<div class="t" style="right:634px;top:745.46px;font-size:16px;line-height:20px;color:#3a3a3a;text-align:right;transform:scaleX(0.963);transform-origin:100% 0;">6</div>
<div class="t" style="right:517px;top:745.46px;font-size:16px;line-height:20px;color:#3a3a3a;text-align:right;transform:scaleX(0.963);transform-origin:100% 0;">6</div>
<div class="t" style="right:400px;top:745.46px;font-size:16px;line-height:20px;color:#3a3a3a;text-align:right;transform:scaleX(0.963);transform-origin:100% 0;">0</div>
<div class="t" style="right:291px;top:745.46px;font-size:16px;line-height:20px;color:#3a3a3a;text-align:right;transform:scaleX(0.963);transform-origin:100% 0;">0</div>
<div class="t" style="left:1302px;top:745.46px;font-size:16px;line-height:20px;color:#3a3a3a;transform:scaleX(0.963);transform-origin:0 0;">Выполнено</div>
<div class="t" style="left:125.0px;top:766.46px;font-size:16px;line-height:20px;color:#3a3a3a;transform:scaleX(0.963);transform-origin:0 0;">06.03.2025</div>
<div class="t" style="left:142.95px;top:787.46px;font-size:16px;line-height:20px;color:#3a3a3a;transform:scaleX(0.963);transform-origin:0 0;">Закваска гл. заморозки CesKa-stAr D227.7 1000мл</div>
<div class="t" style="right:634px;top:787.46px;font-size:16px;line-height:20px;color:#3a3a3a;text-align:right;transform:scaleX(0.963);transform-origin:100% 0;">15</div>
<div class="t" style="right:517px;top:787.46px;font-size:16px;line-height:20px;color:#3a3a3a;text-align:right;transform:scaleX(0.963);transform-origin:100% 0;">15</div>
<div class="t" style="right:400px;top:787.46px;font-size:16px;line-height:20px;color:#3a3a3a;text-align:right;transform:scaleX(0.963);transform-origin:100% 0;">0</div>
<div class="t" style="right:291px;top:787.46px;font-size:16px;line-height:20px;color:#3a3a3a;text-align:right;transform:scaleX(0.963);transform-origin:100% 0;">0</div>
<div class="t" style="left:1302px;top:787.46px;font-size:16px;line-height:20px;color:#3a3a3a;transform:scaleX(0.963);transform-origin:0 0;">В процессе</div>
<div class="t" style="right:634px;top:808.46px;font-size:16px;line-height:20px;color:#3a3a3a;text-align:right;transform:scaleX(0.963);transform-origin:100% 0;">10</div>
<div class="t" style="right:400px;top:808.46px;font-size:16px;line-height:20px;color:#ff0000;text-align:right;transform:scaleX(0.963);transform-origin:100% 0;">-10,00</div>
<div class="t" style="right:291px;top:808.46px;font-size:16px;line-height:20px;color:#ff0000;text-align:right;transform:scaleX(0.963);transform-origin:100% 0;">-100,00%</div>
<div class="t" style="left:1302px;top:808.46px;font-size:16px;line-height:20px;color:#3a3a3a;transform:scaleX(0.963);transform-origin:0 0;">Не начато</div>
<div class="t" style="left:160.89999999999998px;top:829.46px;font-size:16px;line-height:20px;color:#3a3a3a;transform:scaleX(0.963);transform-origin:0 0;">1 до 31.03.2019</div>
<div class="t" style="right:634px;top:829.46px;font-size:16px;line-height:20px;color:#3a3a3a;text-align:right;transform:scaleX(0.963);transform-origin:100% 0;">5</div>
<div class="t" style="right:517px;top:829.46px;font-size:16px;line-height:20px;color:#3a3a3a;text-align:right;transform:scaleX(0.963);transform-origin:100% 0;">15</div>
<div class="t" style="right:400px;top:829.46px;font-size:16px;line-height:20px;color:#3a3a3a;text-align:right;transform:scaleX(0.963);transform-origin:100% 0;">10,00</div>
<div class="t" style="right:291px;top:829.46px;font-size:16px;line-height:20px;color:#3a3a3a;text-align:right;transform:scaleX(0.963);transform-origin:100% 0;">200,00%</div>
<div class="t" style="left:1302px;top:829.46px;font-size:16px;line-height:20px;color:#3a3a3a;transform:scaleX(0.963);transform-origin:0 0;">Выполнено</div>
<div class="t" style="left:142.95px;top:850.46px;font-size:16px;line-height:20px;color:#3a3a3a;transform:scaleX(0.963);transform-origin:0 0;">Хлорофиллин C-10,000P-WS-AP (5кг)</div>
<div class="t" style="right:634px;top:850.46px;font-size:16px;line-height:20px;color:#3a3a3a;text-align:right;transform:scaleX(0.963);transform-origin:100% 0;">6</div>
<div class="t" style="right:400px;top:850.46px;font-size:16px;line-height:20px;color:#ff0000;text-align:right;transform:scaleX(0.963);transform-origin:100% 0;">-6,00</div>
<div class="t" style="right:291px;top:850.46px;font-size:16px;line-height:20px;color:#ff0000;text-align:right;transform:scaleX(0.963);transform-origin:100% 0;">-100,00%</div>
<div class="t" style="left:1302px;top:850.46px;font-size:16px;line-height:20px;color:#3a3a3a;transform:scaleX(0.963);transform-origin:0 0;">Не начато</div>
<div class="t" style="left:160.89999999999998px;top:871.46px;font-size:16px;line-height:20px;color:#3a3a3a;transform:scaleX(0.963);transform-origin:0 0;">1 до 30.12.2018</div>
<div class="t" style="right:634px;top:871.46px;font-size:16px;line-height:20px;color:#3a3a3a;text-align:right;transform:scaleX(0.963);transform-origin:100% 0;">6</div>
<div class="t" style="right:400px;top:871.46px;font-size:16px;line-height:20px;color:#ff0000;text-align:right;transform:scaleX(0.963);transform-origin:100% 0;">-6,00</div>
<div class="t" style="right:291px;top:871.46px;font-size:16px;line-height:20px;color:#ff0000;text-align:right;transform:scaleX(0.963);transform-origin:100% 0;">-100,00%</div>
<div class="t" style="left:1302px;top:871.46px;font-size:16px;line-height:20px;color:#3a3a3a;transform:scaleX(0.963);transform-origin:0 0;">Не начато</div>
<div class="a" style="left:16px;top:360px;width:1px;height:236px;background:#a0a0a0;"></div>
<div class="a" style="left:16px;top:595px;width:68px;height:1px;background:#a0a0a0;"></div>
<div class="a" style="left:31px;top:381px;width:1px;height:215px;background:#a0a0a0;"></div>
<div class="a" style="left:31px;top:595px;width:53px;height:1px;background:#a0a0a0;"></div>
<div class="a" style="left:46px;top:402px;width:1px;height:131px;background:#a0a0a0;"></div>
<div class="a" style="left:46px;top:532px;width:38px;height:1px;background:#a0a0a0;"></div>
<div class="a" style="left:61px;top:423px;width:1px;height:68px;background:#a0a0a0;"></div>
<div class="a" style="left:61px;top:490px;width:23px;height:1px;background:#a0a0a0;"></div>
<div class="a" style="left:61px;top:507px;width:1px;height:26px;background:#a0a0a0;"></div>
<div class="a" style="left:61px;top:532px;width:23px;height:1px;background:#a0a0a0;"></div>
<div class="a" style="left:46px;top:549px;width:1px;height:47px;background:#a0a0a0;"></div>
<div class="a" style="left:46px;top:595px;width:38px;height:1px;background:#a0a0a0;"></div>
<div class="a" style="left:61px;top:570px;width:1px;height:26px;background:#a0a0a0;"></div>
<div class="a" style="left:61px;top:595px;width:23px;height:1px;background:#a0a0a0;"></div>
<div class="a" style="left:16px;top:612px;width:1px;height:278px;background:#a0a0a0;"></div>
<div class="a" style="left:16px;top:889px;width:68px;height:1px;background:#a0a0a0;"></div>
<div class="a" style="left:31px;top:633px;width:1px;height:257px;background:#a0a0a0;"></div>
<div class="a" style="left:31px;top:889px;width:53px;height:1px;background:#a0a0a0;"></div>
<div class="a" style="left:46px;top:654px;width:1px;height:110px;background:#a0a0a0;"></div>
<div class="a" style="left:46px;top:763px;width:38px;height:1px;background:#a0a0a0;"></div>
<div class="a" style="left:61px;top:675px;width:1px;height:47px;background:#a0a0a0;"></div>
<div class="a" style="left:61px;top:721px;width:23px;height:1px;background:#a0a0a0;"></div>
<div class="a" style="left:61px;top:738px;width:1px;height:26px;background:#a0a0a0;"></div>
<div class="a" style="left:61px;top:763px;width:23px;height:1px;background:#a0a0a0;"></div>
<div class="a" style="left:46px;top:780px;width:1px;height:110px;background:#a0a0a0;"></div>
<div class="a" style="left:46px;top:889px;width:38px;height:1px;background:#a0a0a0;"></div>
<div class="a" style="left:61px;top:801px;width:1px;height:47px;background:#a0a0a0;"></div>
<div class="a" style="left:61px;top:847px;width:23px;height:1px;background:#a0a0a0;"></div>
<div class="a" style="left:61px;top:864px;width:1px;height:26px;background:#a0a0a0;"></div>
<div class="a" style="left:61px;top:889px;width:23px;height:1px;background:#a0a0a0;"></div>
<div class="a" style="left:10px;top:348px;width:13px;height:13px;border:1px solid #9a9a9a;border-radius:2px;box-sizing:border-box;background:linear-gradient(#fff 50%,#eee);"></div>
<div class="a" style="left:12px;top:354px;width:9px;height:1px;background:#222;"></div>
<div class="a" style="left:25px;top:369px;width:13px;height:13px;border:1px solid #9a9a9a;border-radius:2px;box-sizing:border-box;background:linear-gradient(#fff 50%,#eee);"></div>
<div class="a" style="left:27px;top:375px;width:9px;height:1px;background:#222;"></div>
<div class="a" style="left:40px;top:390px;width:13px;height:13px;border:1px solid #9a9a9a;border-radius:2px;box-sizing:border-box;background:linear-gradient(#fff 50%,#eee);"></div>
<div class="a" style="left:42px;top:396px;width:9px;height:1px;background:#222;"></div>
<div class="a" style="left:55px;top:411px;width:13px;height:13px;border:1px solid #9a9a9a;border-radius:2px;box-sizing:border-box;background:linear-gradient(#fff 50%,#eee);"></div>
<div class="a" style="left:57px;top:417px;width:9px;height:1px;background:#222;"></div>
<div class="a" style="left:55px;top:495px;width:13px;height:13px;border:1px solid #9a9a9a;border-radius:2px;box-sizing:border-box;background:linear-gradient(#fff 50%,#eee);"></div>
<div class="a" style="left:57px;top:501px;width:9px;height:1px;background:#222;"></div>
<div class="a" style="left:40px;top:537px;width:13px;height:13px;border:1px solid #9a9a9a;border-radius:2px;box-sizing:border-box;background:linear-gradient(#fff 50%,#eee);"></div>
<div class="a" style="left:42px;top:543px;width:9px;height:1px;background:#222;"></div>
<div class="a" style="left:55px;top:558px;width:13px;height:13px;border:1px solid #9a9a9a;border-radius:2px;box-sizing:border-box;background:linear-gradient(#fff 50%,#eee);"></div>
<div class="a" style="left:57px;top:564px;width:9px;height:1px;background:#222;"></div>
<div class="a" style="left:10px;top:600px;width:13px;height:13px;border:1px solid #9a9a9a;border-radius:2px;box-sizing:border-box;background:linear-gradient(#fff 50%,#eee);"></div>
<div class="a" style="left:12px;top:606px;width:9px;height:1px;background:#222;"></div>
<div class="a" style="left:25px;top:621px;width:13px;height:13px;border:1px solid #9a9a9a;border-radius:2px;box-sizing:border-box;background:linear-gradient(#fff 50%,#eee);"></div>
<div class="a" style="left:27px;top:627px;width:9px;height:1px;background:#222;"></div>
<div class="a" style="left:40px;top:642px;width:13px;height:13px;border:1px solid #9a9a9a;border-radius:2px;box-sizing:border-box;background:linear-gradient(#fff 50%,#eee);"></div>
<div class="a" style="left:42px;top:648px;width:9px;height:1px;background:#222;"></div>
<div class="a" style="left:55px;top:663px;width:13px;height:13px;border:1px solid #9a9a9a;border-radius:2px;box-sizing:border-box;background:linear-gradient(#fff 50%,#eee);"></div>
<div class="a" style="left:57px;top:669px;width:9px;height:1px;background:#222;"></div>
<div class="a" style="left:55px;top:726px;width:13px;height:13px;border:1px solid #9a9a9a;border-radius:2px;box-sizing:border-box;background:linear-gradient(#fff 50%,#eee);"></div>
<div class="a" style="left:57px;top:732px;width:9px;height:1px;background:#222;"></div>
<div class="a" style="left:40px;top:768px;width:13px;height:13px;border:1px solid #9a9a9a;border-radius:2px;box-sizing:border-box;background:linear-gradient(#fff 50%,#eee);"></div>
<div class="a" style="left:42px;top:774px;width:9px;height:1px;background:#222;"></div>
<div class="a" style="left:55px;top:789px;width:13px;height:13px;border:1px solid #9a9a9a;border-radius:2px;box-sizing:border-box;background:linear-gradient(#fff 50%,#eee);"></div>
<div class="a" style="left:57px;top:795px;width:9px;height:1px;background:#222;"></div>
<div class="a" style="left:55px;top:852px;width:13px;height:13px;border:1px solid #9a9a9a;border-radius:2px;box-sizing:border-box;background:linear-gradient(#fff 50%,#eee);"></div>
<div class="a" style="left:57px;top:858px;width:9px;height:1px;background:#222;"></div>
</body></html>
